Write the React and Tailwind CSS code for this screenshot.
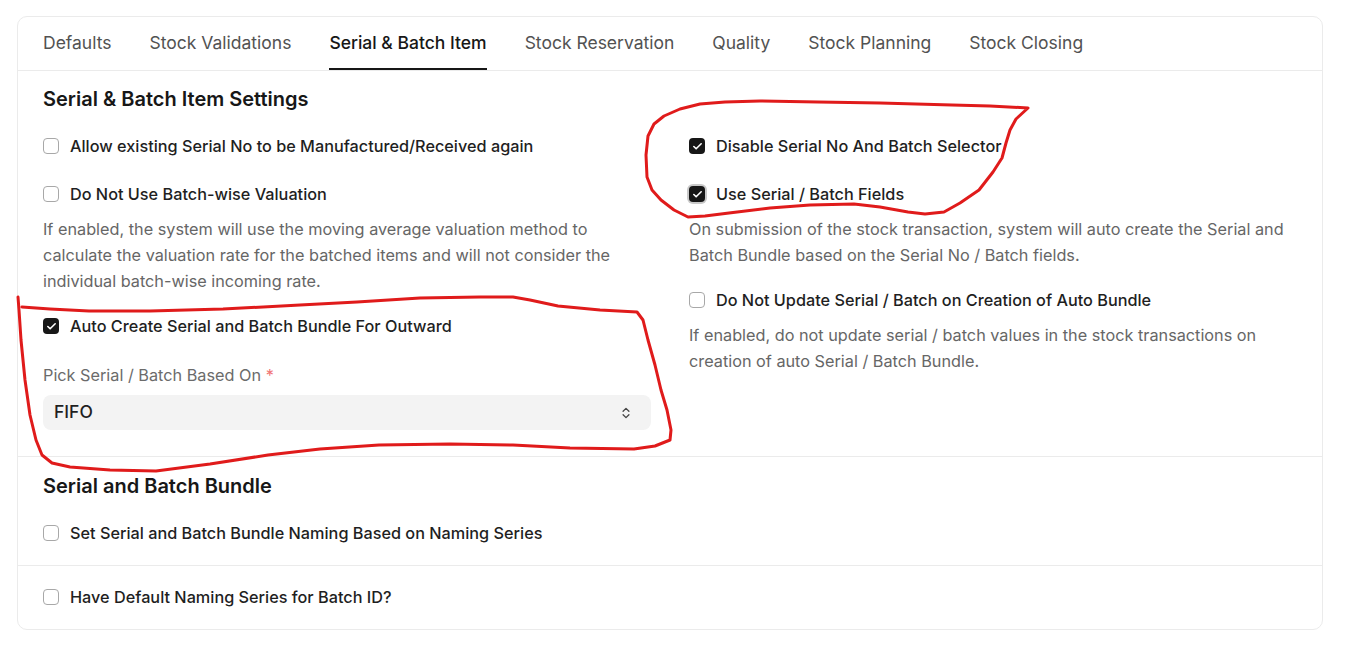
import React from "react";

const FONT = { fontFamily: "Inter, 'Noto Sans', sans-serif" };

function Box({ checked, focus }) {
  if (checked) {
    return (
      <span className={`flex h-[16px] w-[16px] shrink-0 items-center justify-center rounded-[4px] bg-[#171717] ${focus ? "ring-2 ring-[#c9c9c9] ring-offset-0" : ""}`}>
        <svg width="11" height="11" viewBox="0 0 24 24" fill="none" stroke="white" strokeWidth="3.5" strokeLinecap="round" strokeLinejoin="round">
          <path d="M20 6 9 17l-5-5" />
        </svg>
      </span>
    );
  }
  return <span className="block h-[16px] w-[16px] shrink-0 rounded-[4px] border border-[#a8a8a8] bg-white" />;
}

function Row({ label, checked, focus }) {
  return (
    <div className="flex h-[24px] items-center gap-[11px]">
      <Box checked={checked} focus={focus} />
      <span className="text-[16.25px] font-medium text-[#1f1f1f]">{label}</span>
    </div>
  );
}

function Desc({ children }) {
  return <p className="mt-[10px] text-[16.25px] leading-[26px] text-[#666666]">{children}</p>;
}

const tabs = ["Defaults", "Stock Validations", "Serial & Batch Item", "Stock Reservation", "Quality", "Stock Planning", "Stock Closing"];

const loop1 = [
  [1028,108],[990,106],[952,105],[880,103],[818,102],[760,101],[725,102],[700,104],[680,109],[664,116],[654,124],[648,136],[646,155],[647,177],[652,190],[661,200],[674,210],[688,217],[705,216],[729,213],[770,208],[810,205],[854,204],[880,207],[908,212],[925,214],[944,212],[960,203],[979,190],[993,172],[1002,158],[1006,143],[1010,130],[1016,119],[1028,108]
];
const loop2 = [
  [22,307],[50,309],[89,311],[150,311],[223,309],[300,305],[357,302],[420,298],[480,297],[513,297],[530,300],[558,306],[600,310],[637,312],[643,320],[648,340],[655,365],[661,390],[667,410],[671,430],[670,440],[655,446],[634,449],[570,448],[513,445],[450,444],[379,445],[320,449],[268,455],[210,464],[156,471],[110,470],[70,467],[52,463],[42,455],[36,440],[30,415],[25,380],[21,340],[19,310],[18,297]
];
const pts = (a) => a.map((p) => p.join(",")).join(" ");

export default function App() {
  return (
    <div className="relative h-[647px] w-full bg-white" style={FONT}>
      <div className="ml-[17px] w-[1306px] pt-[16px]">
        <div className="h-[614px] rounded-[10px] border border-[#ebebeb] bg-white">
          {/* tabs */}
          <div className="flex h-[54px] gap-[38px] border-b border-[#ebebeb] px-[25px]">
            {tabs.map((t) => (
              <div
                key={t}
                className={`flex h-full items-center border-b-2 pt-[1px] text-[17.5px] ${t === "Serial & Batch Item" ? "border-[#171717] font-medium text-[#171717]" : "border-transparent text-[#525252]"}`}
              >
                {t}
              </div>
            ))}
          </div>

          {/* section 1 */}
          <div className="border-b border-[#ebebeb] px-[25px] pb-[26px] pt-[16px]">
            <h2 className="h-[24px] text-[20px] font-semibold leading-[24px] text-[#171717]">Serial &amp; Batch Item Settings</h2>
            <div className="mt-[23px] grid grid-cols-2 gap-[38px]">
              <div>
                <Row label="Allow existing Serial No to be Manufactured/Received again" />
                <div className="mt-[24px]">
                  <Row label="Do Not Use Batch-wise Valuation" />
                  <Desc>
                    If enabled, the system will use the moving average valuation method to calculate the valuation rate for the batched items and will not consider the individual batch-wise incoming rate.
                  </Desc>
                </div>
                <div className="mt-[20px]">
                  <Row label="Auto Create Serial and Batch Bundle For Outward" checked />
                </div>
                <div className="mt-[25px] h-[24px] text-[16.25px] leading-[24px] text-[#6b6b6b]">
                  Pick Serial / Batch Based On <span className="text-[#f07575]">*</span>
                </div>
                <div className="mt-[8px] flex h-[35px] items-center justify-between rounded-[8px] bg-[#f3f3f3] pl-[11px] pr-[18px]">
                  <span className="text-[17.5px] font-medium text-[#1f1f1f]">FIFO</span>
                  <svg width="14" height="16" viewBox="0 0 24 24" fill="none" stroke="#444" strokeWidth="2.2" strokeLinecap="round" strokeLinejoin="round">
                    <path d="m7 15 5 5 5-5" />
                    <path d="m7 9 5-5 5 5" />
                  </svg>
                </div>
              </div>
              <div>
                <Row label="Disable Serial No And Batch Selector" checked />
                <div className="mt-[24px]">
                  <Row label="Use Serial / Batch Fields" checked focus />
                  <Desc>
                    On submission of the stock transaction, system will auto create the Serial and Batch Bundle based on the Serial No / Batch fields.
                  </Desc>
                </div>
                <div className="mt-[20px]">
                  <Row label="Do Not Update Serial / Batch on Creation of Auto Bundle" />
                  <Desc>
                    If enabled, do not update serial / batch values in the stock transactions on creation of auto Serial / Batch Bundle.
                  </Desc>
                </div>
              </div>
            </div>
          </div>

          {/* section 2 */}
          <div className="border-b border-[#ebebeb] px-[25px] pb-[20px] pt-[17px]">
            <h2 className="h-[24px] text-[20px] font-semibold leading-[24px] text-[#171717]">Serial and Batch Bundle</h2>
            <div className="mt-[23px]">
              <Row label="Set Serial and Batch Bundle Naming Based on Naming Series" />
            </div>
          </div>

          {/* section 3 */}
          <div className="px-[25px] pt-[19px]">
            <Row label="Have Default Naming Series for Batch ID?" />
          </div>
        </div>
      </div>

      <svg className="pointer-events-none absolute left-0 top-0" width="1351" height="647" viewBox="0 0 1351 647" fill="none">
        <polyline points={pts(loop1)} stroke="#e01b1b" strokeWidth="3" strokeLinejoin="round" strokeLinecap="round" />
        <polyline points={pts(loop2)} stroke="#e01b1b" strokeWidth="3" strokeLinejoin="round" strokeLinecap="round" />
      </svg>
    </div>
  );
}
